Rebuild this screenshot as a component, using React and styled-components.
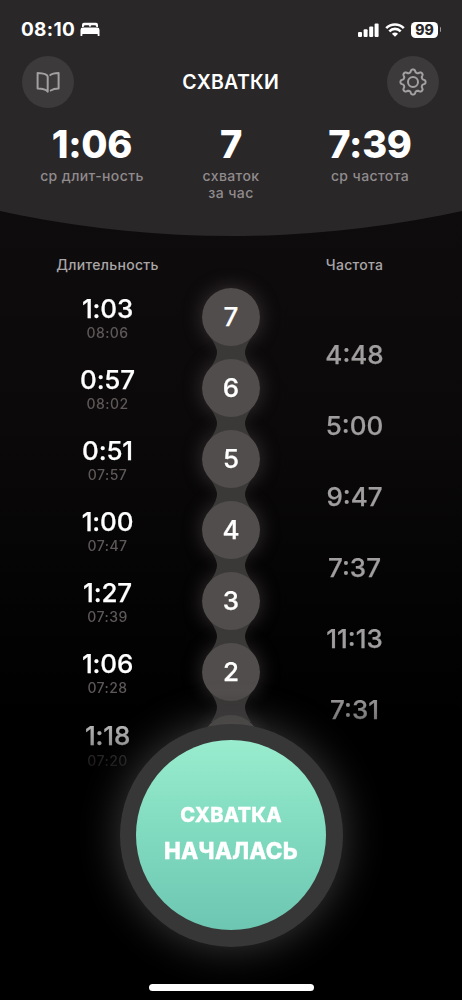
import React from 'react';
import styled, { createGlobalStyle } from 'styled-components';

const GlobalStyle = createGlobalStyle`
  * { box-sizing: border-box; }
  body { margin: 0; background: #000; }
`;

const Screen = styled.main`
  position: relative;
  width: 462px;
  height: 1000px;
  overflow: hidden;
  background: linear-gradient(#0f0c0d 200px, #0b090a 420px, #000 720px);
  color: #fff;
  font-family: Inter, "Liberation Sans", sans-serif;
  white-space: nowrap;
`;

const Header = styled.header`
  height: 236px;
  background: #292728;
  clip-path: circle(1080px at 50% calc(100% - 1080px));
`;

const StatusBar = styled.div`
  display: flex;
  justify-content: space-between;
  align-items: center;
  height: 55px;
  padding: 4px 22px 0 21px;
`;

const StatusGroup = styled.div`
  display: flex;
  align-items: center;
  gap: ${(p) => p.$gap}px;
`;

const Clock = styled.span`
  font-size: 19px;
  line-height: 22px;
  font-weight: 700;
  letter-spacing: 0.3px;
`;

const Battery = styled.span`
  position: relative;
  width: 27px;
  height: 16px;
  border-radius: 4.5px;
  background: #fff;
  color: #292728;
  font-size: 14px;
  line-height: 16px;
  font-weight: 800;
  text-align: center;
  margin-right: 2px;
  &::after {
    content: '';
    position: absolute;
    right: -3px;
    top: 5.5px;
    width: 1.5px;
    height: 5px;
    border-radius: 0 2px 2px 0;
    background: #999798;
  }
`;

const NavBar = styled.nav`
  display: flex;
  justify-content: space-between;
  align-items: center;
  height: 53px;
  padding: 0 23px 0 22.4px;
`;

const RoundButton = styled.button`
  display: flex;
  align-items: center;
  justify-content: center;
  width: 52px;
  height: 52px;
  padding: 0;
  border: 0;
  border-radius: 50%;
  background: #3c3a3a;
  color: #a3a0a1;
`;

const Title = styled.h1`
  margin: 0;
  font-size: 19.5px;
  line-height: 24px;
  font-weight: 600;
  letter-spacing: 0.3px;
`;

const Stats = styled.section`
  display: grid;
  grid-template-columns: 139px 139px 139px;
  justify-content: center;
  padding-top: 16px;
`;

const Stat = styled.div`
  text-align: center;
`;

const StatValue = styled.div`
  font-size: 38px;
  line-height: 40px;
  font-weight: 800;
  letter-spacing: -0.3px;
`;

const StatLabel = styled.div`
  margin-top: 3px;
  color: #918b8d;
  font-size: 14px;
  line-height: 17px;
  font-weight: 500;
  letter-spacing: 0.4px;
`;

const columns = '175px 112px 175px';

const ColumnTitles = styled.div`
  display: grid;
  grid-template-columns: ${columns};
  height: 32px;
  padding-top: 20px;
`;

const ColumnTitle = styled.div`
  padding-left: ${(p) => (p.$end ? 0 : 40)}px;
  padding-right: ${(p) => (p.$end ? 40 : 0)}px;
  text-align: center;
  color: #a9a6a7;
  font-size: 14px;
  line-height: 17px;
  font-weight: 500;
  letter-spacing: 0.3px;
`;

const List = styled.section`
  height: 532px;
  padding-top: 20px;
  overflow: hidden;
  mask-image: linear-gradient(#000 424px, rgba(0, 0, 0, 0.72) 455px, rgba(0, 0, 0, 0.6) 475px, transparent 520px);
`;

const Row = styled.div`
  display: grid;
  grid-template-columns: ${columns};
  height: 71.1px;
`;

const DurationCell = styled.div`
  padding: ${(p) => (p.$last ? 5.5 : 4.5)}px 0 0 40px;
  text-align: center;
`;

const Duration = styled.div`
  font-size: 26px;
  line-height: 32px;
  font-weight: 500;
  letter-spacing: -0.15px;
  -webkit-text-stroke: 0.25px currentColor;
`;

const StartTime = styled.div`
  margin-top: -0.5px;
  color: #5f5859;
  font-size: 14px;
  line-height: 17px;
  font-weight: 500;
  letter-spacing: 0.45px;
`;

const NodeCell = styled.div`
  display: flex;
  flex-direction: column;
  align-items: center;
  &::before {
    content: '';
    width: 58px;
    height: 58px;
    margin-bottom: -58px;
    border-radius: 50%;
    box-shadow: 0 0 20px rgba(125, 115, 115, 0.4);
  }
`;

const Node = styled.div`
  flex: none;
  position: relative;
  z-index: 1;
  width: 58px;
  height: 58px;
  border-radius: 50%;
  background: #524d4d;
  text-align: center;
  font-size: 26px;
  line-height: 58px;
  font-weight: 500;
  -webkit-text-stroke: 0.25px currentColor;
`;

const Connector = styled.svg`
  flex: none;
  position: relative;
  width: 40px;
  height: 29.1px;
  margin: -8px 0;
`;

const Interval = styled.div`
  padding: 50.5px 40px 0 0;
  text-align: center;
  color: #a19e9f;
  font-size: 26px;
  line-height: 32px;
  font-weight: 500;
  -webkit-text-stroke: 0.25px currentColor;
`;

const StartButton = styled.button`
  position: absolute;
  left: 119.5px;
  top: 723.5px;
  width: 223px;
  height: 223px;
  padding: 0;
  border: 0;
  border-radius: 50%;
  background: #383737;
  box-shadow: 0 0 42px rgba(150, 150, 150, 0.4);
  display: grid;
  place-items: center;
`;

const ButtonFace = styled.span`
  display: flex;
  flex-direction: column;
  justify-content: center;
  width: 190px;
  height: 190px;
  padding-bottom: 4px;
  border-radius: 50%;
  background: linear-gradient(#99ecce, #82dcc0 45%, #6dc6b2);
  color: #fff;
  font: 800 20px/36px Inter, "Liberation Sans", sans-serif;
  text-align: center;
`;

const ButtonLine = styled.span`
  font-size: ${(p) => p.$size}px;
  letter-spacing: ${(p) => p.$spacing}px;
  -webkit-text-stroke: 0.3px currentColor;
`;

const HomeIndicator = styled.div`
  position: absolute;
  left: 149px;
  top: 984px;
  width: 165px;
  height: 7px;
  border-radius: 4px;
  background: #fff;
`;

const BedIcon = () => (
  <svg width="20" height="15" viewBox="0 0 20 15" fill="currentColor">
    <path d="M2 5V2.8Q2 .8 4 .8H16Q18 .8 18 2.8V5H16.3Q16.3 3.3 15 3.3H11.5Q10.5 3.3 10.4 5H9.6Q9.5 3.3 8.5 3.3H5Q3.7 3.3 3.7 5Z" />
    <path d="M.5 8Q.5 5.6 2.8 5.6H17.2Q19.5 5.6 19.5 8V14H17.7V12.4Q17.7 11.9 17.2 11.9H2.8Q2.3 11.9 2.3 12.4V14H.5Z" />
  </svg>
);

const SignalIcon = () => (
  <svg width="21" height="14" viewBox="0 0 21 14" fill="currentColor">
    <rect x="0" y="9" width="4" height="5" rx="1" />
    <rect x="5.6" y="6.3" width="4" height="7.7" rx="1" />
    <rect x="11.2" y="3.5" width="4" height="10.5" rx="1" />
    <rect x="16.6" y="0.4" width="4" height="13.6" rx="1" />
  </svg>
);

const WifiIcon = () => (
  <svg width="20" height="14" viewBox="0 0 20 14" fill="none" stroke="currentColor" strokeWidth="2.6">
    <path d="M1.2 5.1Q5 1.5 10 1.5T18.8 5.1" />
    <path d="M4.3 8.4Q6.7 5.9 10 5.9T15.7 8.4" />
    <path d="M10 13.8L6.9 10.8Q10 8.4 13.1 10.8Z" fill="currentColor" stroke="none" />
  </svg>
);

const BookIcon = () => (
  <svg width="26" height="26" viewBox="0 0 26 26" fill="none" stroke="currentColor" strokeWidth="2" strokeLinejoin="round" strokeLinecap="round">
    <path d="M12.7 22.6V7.6C12.2 5.5 9 4.2 2.6 4V19.6C7.5 19.7 11 20.5 12.7 22.6" />
    <path d="M15.3 6.1C16.8 4.7 19.5 4.1 23.6 4V19.6C20.5 19.7 17.8 20.3 15.7 21.5" />
  </svg>
);

const GEAR = Array.from({ length: 97 }, (_, i) => {
  const a = (i / 96) * Math.PI * 2;
  const c = Math.cos(8 * a);
  const r = 11.15 + 1.5 * Math.tanh(1.7 * c);
  return `${i ? 'L' : 'M'}${(14 + r * Math.sin(a)).toFixed(2)} ${(14 - r * Math.cos(a)).toFixed(2)}`;
}).join('') + 'Z';

const GearIcon = () => (
  <svg width="28" height="28" viewBox="0 0 28 28" fill="none" stroke="currentColor" strokeWidth="2" strokeLinejoin="round">
    <path d={GEAR} />
    <circle cx="14" cy="14" r="5" />
  </svg>
);

const entries = [
  { n: 7, duration: '1:03', start: '08:06', interval: '4:48' },
  { n: 6, duration: '0:57', start: '08:02', interval: '5:00' },
  { n: 5, duration: '0:51', start: '07:57', interval: '9:47' },
  { n: 4, duration: '1:00', start: '07:47', interval: '7:37' },
  { n: 3, duration: '1:27', start: '07:39', interval: '11:13' },
  { n: 2, duration: '1:06', start: '07:28', interval: '7:31' },
  { n: 1, duration: '1:18', start: '07:20' },
];

export default function App() {
  return (
    <>
      <GlobalStyle />
      <Screen>
        <Header>
          <StatusBar>
            <StatusGroup $gap={5}>
              <Clock>08:10</Clock>
              <BedIcon />
            </StatusGroup>
            <StatusGroup $gap={6}>
              <SignalIcon />
              <WifiIcon />
              <Battery>99</Battery>
            </StatusGroup>
          </StatusBar>
          <NavBar>
            <RoundButton aria-label="Журнал"><BookIcon /></RoundButton>
            <Title>СХВАТКИ</Title>
            <RoundButton aria-label="Настройки"><GearIcon /></RoundButton>
          </NavBar>
          <Stats>
            <Stat>
              <StatValue>1:06</StatValue>
              <StatLabel>ср длит-ность</StatLabel>
            </Stat>
            <Stat>
              <StatValue>7</StatValue>
              <StatLabel>схваток<br />за час</StatLabel>
            </Stat>
            <Stat>
              <StatValue>7:39</StatValue>
              <StatLabel>ср частота</StatLabel>
            </Stat>
          </Stats>
        </Header>
        <ColumnTitles>
          <ColumnTitle>Длительность</ColumnTitle>
          <span />
          <ColumnTitle $end>Частота</ColumnTitle>
        </ColumnTitles>
        <List>
          {entries.map((e) => (
            <Row key={e.n}>
              <DurationCell $last={!e.interval}>
                <Duration>{e.duration}</Duration>
                <StartTime>{e.start}</StartTime>
              </DurationCell>
              <NodeCell>
                <Node>{e.n}</Node>
                {e.interval && (
                  <Connector viewBox="0 0 40 29.1" fill="#3b3838">
                    <path d="M0 0Q6 9 6 14.55T0 29.1H40Q34 20 34 14.55T40 0Z" />
                  </Connector>
                )}
              </NodeCell>
              {e.interval && <Interval>{e.interval}</Interval>}
            </Row>
          ))}
        </List>
        <StartButton>
          <ButtonFace>
            <ButtonLine $size={20} $spacing={0.2}>СХВАТКА</ButtonLine>
            <ButtonLine $size={22.5} $spacing={0.2}>НАЧАЛАСЬ</ButtonLine>
          </ButtonFace>
        </StartButton>
        <HomeIndicator />
      </Screen>
    </>
  );
}
